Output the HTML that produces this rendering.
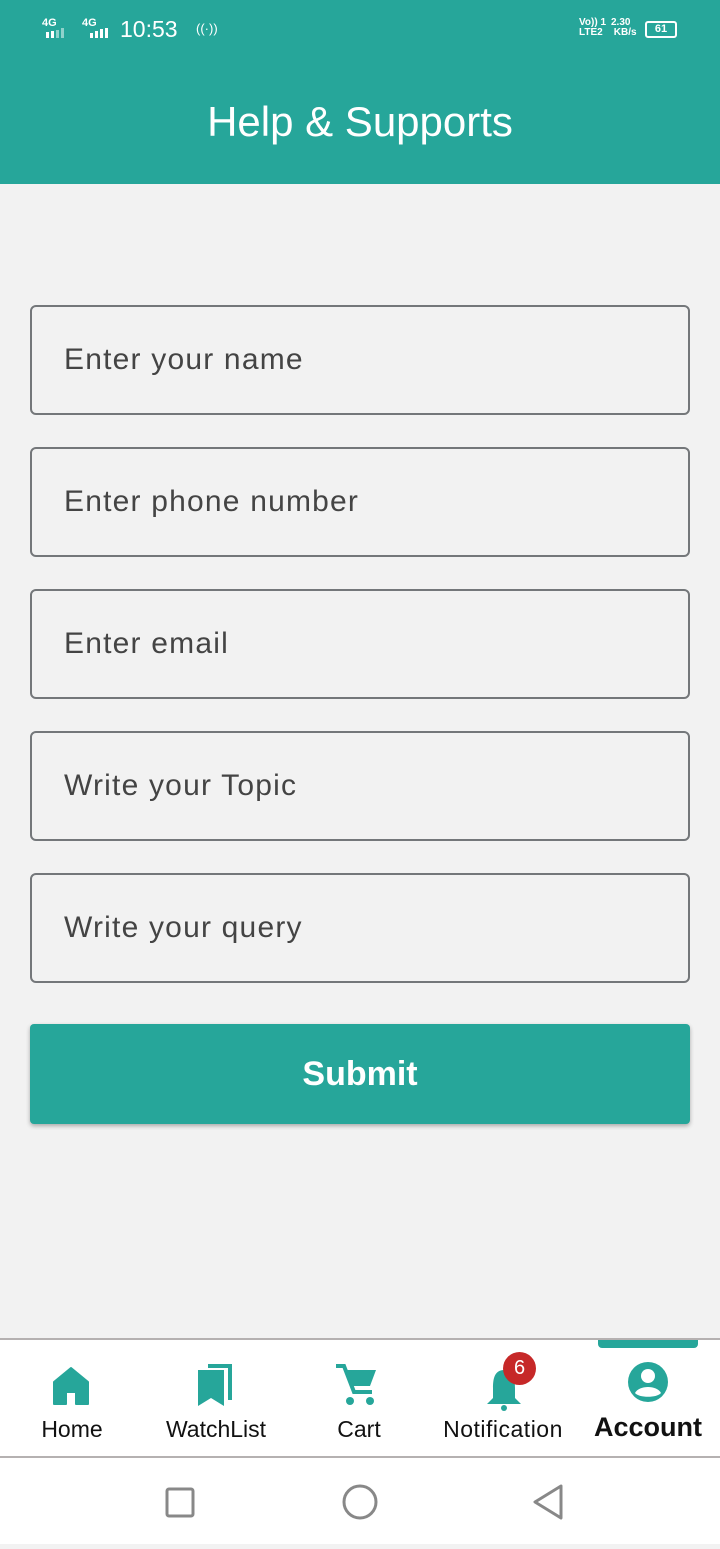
<!DOCTYPE html>
<html><head><meta charset="utf-8"><style>
*{margin:0;padding:0;box-sizing:border-box}
body{width:720px;height:1544px;background:#f2f2f2;font-family:"Liberation Sans",sans-serif;position:relative;overflow:hidden}
.hdr{position:absolute;left:0;top:0;width:720px;height:184px;background:#26a69a;color:#fff}
.sb{position:absolute;top:16px;font-size:23px;color:#fff}
.title{position:absolute;top:98px;width:100%;text-align:center;font-size:42px}
.in{position:absolute;left:30px;width:660px;height:110px;border:2px solid #74777a;border-radius:6px;font-size:30px;color:#444;padding-left:32px;line-height:106px;letter-spacing:1.2px}
.btn{position:absolute;left:30px;top:1024px;width:660px;height:100px;background:#26a69a;border-radius:4px;color:#fff;font-size:34px;font-weight:bold;text-align:center;line-height:100px;box-shadow:0 2px 4px rgba(0,0,0,.3)}
.nav{position:absolute;left:0;top:1338px;width:720px;height:120px;background:#fff;border-top:2px solid #b5b1b1;border-bottom:2px solid #b5b1b1}
.lbl{position:absolute;top:76px;font-size:23px;color:#111;text-align:center;width:144px}
.ic{position:absolute}
.sys{position:absolute;top:1458px;width:720px;height:86px;background:#fff}
</style></head><body>
<div class="hdr">
<div class="sb" style="left:42px;font-size:11px;font-weight:bold;top:17px">4G</div>
<div class="sb" style="left:82px;font-size:11px;font-weight:bold;top:17px">4G</div>
<svg class="ic" style="left:42px;top:28px" width="80" height="12"><rect x="4" y="4" width="3" height="6" fill="#fff"/><rect x="9" y="3" width="3" height="7" fill="#fff"/><rect x="14" y="2" width="3" height="8" fill="#8fd2cb"/><rect x="19" y="0" width="3" height="10" fill="#8fd2cb"/><rect x="48" y="5" width="3" height="5" fill="#fff"/><rect x="53" y="3" width="3" height="7" fill="#fff"/><rect x="58" y="1" width="3" height="9" fill="#fff"/><rect x="63" y="0" width="3" height="10" fill="#fff"/></svg>
<div class="sb" style="left:120px">10:53</div>
<div class="sb" style="left:196px;font-size:13px;top:21px">((·))</div>
<div class="sb" style="left:579px;font-size:10px;font-weight:bold;top:18px;line-height:10px">Vo)) 1<br>LTE2</div>
<div class="sb" style="left:611px;font-size:10px;font-weight:bold;top:18px;line-height:10px">2.30<br>&nbsp;KB/s</div>
<div style="position:absolute;left:645px;top:21px;width:32px;height:17px;border:2px solid #fff;border-radius:3px;font-size:11px;color:#fff;text-align:center;line-height:13px;font-weight:bold">61</div>
<div class="title">Help &amp; Supports</div>
</div>
<div class="in" style="top:305px">Enter your name</div>
<div class="in" style="top:447px">Enter phone number</div>
<div class="in" style="top:589px">Enter email</div>
<div class="in" style="top:731px">Write your Topic</div>
<div class="in" style="top:873px">Write your query</div>
<div class="btn">Submit</div>
<div class="nav">
<div style="position:absolute;left:598px;top:0;width:100px;height:8px;background:#26a69a;border-radius:0 0 4px 4px"></div>
<svg class="ic" style="left:52px;top:26px" width="40" height="40" viewBox="0 0 40 40"><path d="M2 16 L19 2 L36 16 V38 H24 V26 H14 V38 H2Z" fill="#26a69a" stroke="#26a69a" stroke-linejoin="round" stroke-width="2"/></svg>
<svg class="ic" style="left:196px;top:22px" width="40" height="46" viewBox="0 0 40 46"><path d="M12 2 H36 V38 H32 V6 H12Z" fill="#26a69a"/><path d="M2 8 H28 V44 L15 36 L2 44Z" fill="#26a69a"/></svg>
<svg class="ic" style="left:336px;top:24px" width="44" height="42" viewBox="0 0 44 42"><path d="M0 2 H8 L18 28 H36" fill="none" stroke="#26a69a" stroke-width="4"/><path d="M9 6 H40 L34 22 H15Z" fill="#26a69a"/><circle cx="14" cy="37" r="4" fill="#26a69a"/><circle cx="34" cy="37" r="4" fill="#26a69a"/></svg>
<svg class="ic" style="left:486px;top:28px" width="36" height="44" viewBox="0 0 36 44"><path d="M18 2 C8 2 7 12 7 20 V30 L1 36 H35 L29 30 V20 C29 12 28 2 18 2Z" fill="#26a69a"/><circle cx="18" cy="40" r="3" fill="#26a69a"/></svg>
<div style="position:absolute;left:503px;top:12px;width:33px;height:33px;border-radius:50%;background:#c62828;color:#fff;font-size:20px;text-align:center;line-height:33px">6</div>
<svg class="ic" style="left:626px;top:20px" width="44" height="44" viewBox="0 0 44 44"><circle cx="22" cy="22" r="20" fill="#26a69a"/><circle cx="22" cy="16" r="7" fill="#fff"/><path d="M9 33 C13 25 31 25 35 33 C31 38 13 38 9 33Z" fill="#fff"/></svg>
<div class="lbl" style="left:0">Home</div>
<div class="lbl" style="left:144px">WatchList</div>
<div class="lbl" style="left:287px">Cart</div>
<div class="lbl" style="left:431px;letter-spacing:0.5px">Notification</div>
<div class="lbl" style="left:576px;font-size:27px;font-weight:bold;top:72px">Account</div>
</div>
<div class="sys">
<svg width="720" height="86"><rect x="167" y="31" width="26" height="27" rx="2" fill="none" stroke="#888" stroke-width="3"/><ellipse cx="360" cy="44" rx="16" ry="16" fill="none" stroke="#888" stroke-width="3"/><path d="M561 28 L535 44 L561 60Z" fill="none" stroke="#888" stroke-width="3" stroke-linejoin="round"/></svg>
</div>
</body></html>
